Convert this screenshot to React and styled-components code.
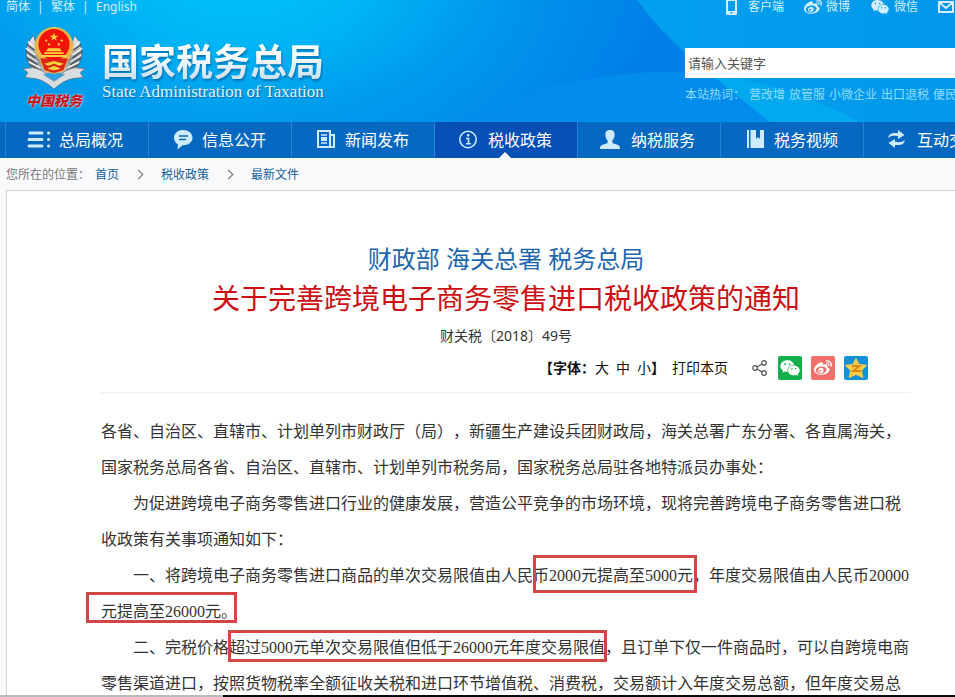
import React from "react";
import styled, { createGlobalStyle } from "styled-components";
import { FaWeibo } from "react-icons/fa";
import { AiFillWechat } from "react-icons/ai";

const navItems = [
  { icon: "list", label: "总局概况" },
  { icon: "chat", label: "信息公开" },
  { icon: "news", label: "新闻发布" },
  { icon: "info", label: "税收政策", active: true },
  { icon: "user", label: "纳税服务" },
  { icon: "book", label: "税务视频" },
  { icon: "swap", label: "互动交流" },
];

const hotWords = ["营改增", "放管服", "小微企业", "出口退税", "便民办税"];

const icons = {
  list: (
    <g stroke="currentColor" strokeWidth="3" strokeLinecap="round">
      <path d="M3 4h12M2 10.500h13M2 17h13" />
      <path d="M21.500 4h.1M21.500 10.500h.1M21.500 17h.1" />
    </g>
  ),
  chat: (
    <g>
      <path
        fill="currentColor"
        d="M13 1C8 1 4 4.200 4 8.800c0 3 1.800 5.400 4 6.700L7.500 20.500l5-4.200h.5c5.500 0 9.500-3 9.500-7.500S18.500 1 13 1z"
      />
      <path d="M9 7h9M9 10.500h7" stroke="#0768c1" strokeWidth="1.400" />
    </g>
  ),
  news: (
    <g fill="none" stroke="currentColor" strokeWidth="2">
      <path d="M5 2h12v16H5zM17 6h4v12h-5" />
      <path d="M8 6h6M8 14h6" strokeWidth="1.500" />
      <path d="M8 10h6" strokeWidth="4" />
    </g>
  ),
  info: (
    <g fill="none" stroke="currentColor" strokeWidth="1.600">
      <circle cx="12" cy="10.500" r="8.200" />
      <path d="M10 9.500h2.500v5M10 14.700h5" />
      <circle cx="12.200" cy="6.300" r=".6" fill="currentColor" />
    </g>
  ),
  user: (
    <path
      fill="currentColor"
      d="M11 1C8 1 6.200 3 6.400 5.800c.1 2.700 1.200 4.700 2.400 6.200.2 1.500-.4 2.200-1.800 2.800C3.500 15.800 1 16 1 20h20c0-4-2.500-4.200-6-5.200-1.400-.6-2-1.300-1.800-2.800 1.200-1.500 2.300-3.500 2.400-6.200C15.800 3 14 1 11 1z"
    />
  ),
  book: (
    <g fill="currentColor">
      <path d="M5 1h2v18H5z" />
      <path d="M8.500 1H14v9l2-2 2 2V1h4v18H8.500z" />
    </g>
  ),
  swap: (
    <g fill="currentColor">
      <path d="M3 9c1-4.500 4-5.500 10-5V1l6.500 5L13 10V7.200C9 6.500 6 6.500 3 9z" />
      <path d="M20 11c-1 4.500-4 5.500-10 5V19l-6.500-5L10 10v2.800c4 .7 7 .7 10-1.800z" />
    </g>
  ),
};

const Emblem = () => (
  <EmblemBox viewBox="0 0 66 66" aria-hidden="true">
    <defs>
      <linearGradient id="silver" x1="0" y1="0" x2="0" y2="1">
        <stop offset="0" stopColor="#f4f4f4" />
        <stop offset=".5" stopColor="#8d9298" />
        <stop offset="1" stopColor="#e9edf0" />
      </linearGradient>
    </defs>
    <g fill="url(#silver)" stroke="#4f5a63" strokeWidth=".7">
      <path d="M12 10C1 20 1 38 18 52l15 8 15-8c17-14 17-32 6-42l-6 20-15 12-15-12z" />
    </g>
    <g stroke="#3f474e" strokeWidth="1.300" fill="none">
      <path d="M5 19l8 6M4 26l10 7M5 33l11 7M8 40l12 6M13 47l10 3" />
      <path d="M61 19l-8 6M62 26l-10 7M61 33l-11 7M58 40l-12 6M53 47l-10 3" />
    </g>
    <g stroke="#fff" strokeWidth="1.200" fill="none">
      <path d="M6 16l7 6M4 23l10 7M5 30l11 7M7 37l12 6" />
      <path d="M60 16l-7 6M62 23l-10 7M61 30l-11 7M59 37l-12 6" />
    </g>
    <path
      d="M1 44l10-1c8 1 15 6 22 12 7-6 14-11 22-12l10 1-5 4 3 5-9 1c-8 1-14 5-21 11-7-6-13-10-21-11l-9-1 3-5z"
      fill="#d9dee2"
      stroke="#6d757c"
      strokeWidth=".8"
    />
    <path d="M22 50l11-3 11 3-11 7z" fill="#2ba2e6" stroke="#8b9299" strokeWidth=".8" />
    <circle cx="33" cy="21" r="20" fill="#e9b64b" />
    <path d="M18 33h30l-5 13-10 3-10-3z" fill="#db2717" stroke="#e9b64b" />
    <circle cx="33" cy="19" r="16" fill="#f01408" />
    <g fill="#ffd23b">
      <path d="M33 7l1.200 3h3.200l-2.600 2 1 3-2.800-1.900-2.800 1.900 1-3-2.600-2h3.200z" />
      <circle cx="25" cy="15" r="1.200" />
      <circle cx="28" cy="19" r="1.200" />
      <circle cx="38" cy="19" r="1.200" />
      <circle cx="41" cy="15" r="1.200" />
      <path d="M27 23h12l2 3H25zM23 27h20v2H23zM20 30h26v2H20z" />
      <path d="M23 39l10-3 10 3-4 2-6-2-6 2zM26 44l7-3 7 3-7 2z" />
    </g>
  </EmblemBox>
);

const App = () => {
  return (
    <>
      <GlobalStyle />
      <Page>
        <Header>
          <Backdrop viewBox="0 0 1004 122" preserveAspectRatio="none" aria-hidden="true">
            <defs>
              <linearGradient id="fan">
                <stop offset="0" stopColor="#02a0ee" />
                <stop offset="1" stopColor="#0396ea" />
              </linearGradient>
            </defs>
            <path d="M455 122Q560 74 660 72H715L770 122z" fill="#028dec" />
            <path d="M637 0Q668 42 712 75L770 122H1004V0z" fill="url(#fan)" />
            <path d="M712 75Q790 84 860 122H770z" fill="#03a9ee" />
          </Backdrop>
          <TopBar>
            <Langs>
              <a href="#cn">简体</a>
              <i>|</i>
              <a href="#tw">繁体</a>
              <i>|</i>
              <a href="#en">English</a>
            </Langs>
            <Tools>
              <Tool href="#app" $gap={11}>
                <svg width="11" height="16" viewBox="0 0 11 16">
                  <path fill="currentColor" fillRule="evenodd" d="M1 0h9l1 1v14l-1 1H1l-1-1V1zm1 2v10h7V2zm2.500 11v1.500h2V13z" />
                </svg>
                客户端
              </Tool>
              <Tool href="#weibo" $gap={4}>
                <FaWeibo size={18} />
                微博
              </Tool>
              <Tool href="#weixin" $gap={4}>
                <AiFillWechat size={20} />
                微信
              </Tool>
              <Tool href="#mail" $gap={4}>
                <svg width="16" height="12" viewBox="0 0 16 12" fill="none" stroke="currentColor" strokeWidth="2">
                  <path d="M1 1h14v10H1zM2 2l6 5 6-5" />
                </svg>
                邮箱
              </Tool>
            </Tools>
          </TopBar>
          <Banner>
            <Brand>
              <Seal>
                <Emblem />
                <SealText>中国税务</SealText>
              </Seal>
              <div>
                <BrandName>国家税务总局</BrandName>
                <BrandSub>State Administration of Taxation</BrandSub>
              </div>
            </Brand>
            <Search>
              <SearchInput type="text" placeholder="请输入关键字" aria-label="请输入关键字" />
              <HotWords>
                <span>本站热词：</span>
                {hotWords.map((word) => (
                  <a href="#hot" key={word}>{word}</a>
                ))}
              </HotWords>
            </Search>
          </Banner>
        </Header>

        <Nav>
          {navItems.map((item) => (
            <NavItem href="#nav" key={item.label} $active={item.active}>
              <svg width="24" height="22" viewBox="0 0 24 22">{icons[item.icon]}</svg>
              {item.label}
            </NavItem>
          ))}
        </Nav>

        <Crumbs>
          <span>您所在的位置：</span>
          <a href="#home">首页</a>
          <Arrow />
          <a href="#policy">税收政策</a>
          <Arrow />
          <a href="#latest">最新文件</a>
        </Crumbs>

        <Article>
          <Issuer>财政部 海关总署 税务总局</Issuer>
          <Title>关于完善跨境电子商务零售进口税收政策的通知</Title>
          <DocNo>财关税〔2018〕49号</DocNo>
          <ToolRow>
            <SizePicker>
              <b>【字体：</b>
              <TextButton type="button">大</TextButton>
              <TextButton type="button" $gap>中</TextButton>
              <TextButton type="button" $gap>小</TextButton>
              <b>】</b>
              <TextButton type="button" $gap>打印本页</TextButton>
            </SizePicker>
            <Shares>
              <svg width="15" height="16" viewBox="0 0 15 16" fill="none" stroke="#555" strokeWidth="1.200">
                <circle cx="3" cy="8" r="2.300" />
                <circle cx="12" cy="3" r="2.300" />
                <circle cx="12" cy="13" r="2.300" />
                <path d="M5 7l5-3M5 9l5 3" />
              </svg>
              <ShareButton type="button" aria-label="微信" $color="#14b04c">
                <AiFillWechat size={22} />
              </ShareButton>
              <ShareButton type="button" aria-label="微博" $color="#f0716b">
                <FaWeibo size={18} />
              </ShareButton>
              <ShareButton type="button" aria-label="QQ空间" $color="#1191dc">
                <svg width="22" height="22" viewBox="0 0 22 22">
                  <path
                    d="M11 2l3 5.800 7 .6-5 4.900 1.500 6.700L11 17l-6.500 3L6 13.300 1 8.400l7-.6z"
                    fill="#fdcb45"
                    stroke="#fdcb45"
                    strokeWidth="1.500"
                    strokeLinejoin="round"
                  />
                  <path d="M7 9h7.500L8 14h8" fill="none" stroke="#e08716" strokeWidth="1.800" />
                </svg>
              </ShareButton>
            </Shares>
          </ToolRow>
          <Content>
            <p>
              各省、自治区、直辖市、计划单列市财政厅（局），新疆生产建设兵团财政局，海关总署广东分署、各直属海关，国家税务总局各省、自治区、直辖市、计划单列市税务局，国家税务总局驻各地特派员办事处：
            </p>
            <Para>
              为促进跨境电子商务零售进口行业的健康发展，营造公平竞争的市场环境，现将完善跨境电子商务零售进口税收政策有关事项通知如下：
            </Para>
            <Para>
              一、将跨境电子商务零售进口商品的单次交易限值由人民
              <Boxed $inset="-3px -4px 1px 0">币2000元提高至5000元</Boxed>
              ，年度交易限值由人民币20000
              <Boxed $inset="-2px 0 7px -15px">元提高至26000元。</Boxed>
            </Para>
            <Para>
              二、完税价格
              <Boxed $inset="0 -2px 4px -1px">超过5000元单次交易限值但低于26000元年度交易限值</Boxed>
              ，且订单下仅一件商品时，可以自跨境电商零售渠道进口，按照货物税率全额征收关税和进口环节增值税、消费税，交易额计入年度交易总额，但年度交易总额
            </Para>
          </Content>
        </Article>
        <BottomEdge />
      </Page>
    </>
  );
};

export default App;

const GlobalStyle = createGlobalStyle`
  * {
    box-sizing: border-box;
  }
  body {
    margin: 0;
    overflow: hidden;
    background: #f8f9fb;
    font-family: "Noto Sans", "Noto Sans CJK SC", sans-serif;
    font-size: 12px;
    color: #333;
    text-spacing-trim: space-all;
  }
  a {
    color: inherit;
    text-decoration: none;
  }
  p, h1, h2 {
    margin: 0;
    font-weight: normal;
  }
  button {
    padding: 0;
    border: 0;
    background: none;
    font: inherit;
    color: inherit;
    cursor: pointer;
  }
`;

const Page = styled.div`
  min-width: 1004px;
  height: 100vh;
  overflow: hidden;
`;

const Header = styled.header`
  position: relative;
  height: 122px;
  color: #d3efff;
  background:
    radial-gradient(ellipse 420px 230px at 240px -20px, #00c4fb, #00b4f5 30%, rgba(0, 160, 238, 0.7) 60%, transparent),
    linear-gradient(90deg, #0598ea, #018ae9 40%, #0080e8 58%);
`;

const Backdrop = styled.svg`
  position: absolute;
  inset: 0;
  width: 100%;
  height: 100%;
`;

const TopBar = styled.div`
  position: relative;
  display: flex;
  justify-content: space-between;
  height: 14px;
  line-height: 14px;
`;

const Langs = styled.div`
  display: flex;
  padding-left: 6px;

  i {
    width: 21px;
    padding-left: 7px;
    font-style: normal;
  }
`;

const Tools = styled.div`
  display: flex;
  gap: 20px;
  width: 278px;
`;

const Tool = styled.a`
  display: flex;
  flex-shrink: 0;
  align-items: center;
  gap: ${(props) => props.$gap}px;
`;

const Banner = styled.div`
  position: relative;
  display: flex;
  justify-content: space-between;
`;

const Brand = styled.div`
  display: flex;
  gap: 16px;
  padding: 11px 0 0 22px;
`;

const Seal = styled.div`
  width: 64px;
`;

const EmblemBox = styled.svg`
  display: block;
  width: 64px;
  height: 66px;
`;

const SealText = styled.div`
  font-size: 14px;
  font-style: italic;
  font-weight: 900;
  line-height: 20px;
  text-align: center;
  color: #c8161d;
  text-shadow: 0 0 2px #fff;
`;

const BrandName = styled.h1`
  padding-top: 17px;
  font-size: 37px;
  font-weight: bold;
  line-height: 40px;
  color: transparent;
  background: linear-gradient(#fff 50%, #cfe3f1 90%);
  background-clip: text;
  filter: drop-shadow(1px 2px 1px rgba(0, 60, 120, 0.5));
`;

const BrandSub = styled.div`
  font-family: "Liberation Serif", serif;
  font-size: 17px;
  line-height: 20px;
  color: #e3f4fd;
  text-shadow: 1px 1px 1px rgba(0, 60, 120, 0.6);
`;

const Search = styled.div`
  width: 319px;
  padding-top: 34px;
`;

const SearchInput = styled.input`
  display: block;
  width: 100%;
  height: 30px;
  padding: 0 3px;
  border: 0;
  border-radius: 0;
  background: #fff;
  font: inherit;
  font-size: 13px;

  &::placeholder {
    color: #555;
    opacity: 1;
  }
`;

const HotWords = styled.div`
  display: flex;
  gap: 4px;
  line-height: 34px;
  white-space: nowrap;
  color: #8fdcff;
`;

const Nav = styled.nav`
  display: flex;
  height: 36px;
  padding-left: 5px;
  background: #0768c1;
  overflow: hidden;
`;

const NavItem = styled.a`
  position: relative;
  display: flex;
  flex: 0 0 143px;
  align-items: center;
  gap: 8px;
  padding-left: 21px;
  border-left: 1px solid #2585d3;
  font-size: 16px;
  line-height: 38px;
  color: #fff;
  background: ${(props) => (props.$active ? "#054fb5" : "none")};

  svg {
    color: #cdebff;
  }

  &::after {
    content: "";
    display: ${(props) => (props.$active ? "block" : "none")};
    position: absolute;
    bottom: 0;
    left: 50%;
    margin-left: -7px;
    border: 6px solid transparent;
    border-top: 0;
    border-bottom-color: #fff;
  }
`;

const Crumbs = styled.div`
  display: flex;
  align-items: center;
  height: 32px;
  padding-left: 6px;
  color: #777;

  a {
    color: #14609c;
  }
  span {
    margin-right: 5px;
  }
`;

const Arrow = styled.i`
  width: 7px;
  height: 7px;
  margin: 0 19px 0 16px;
  border: solid #666;
  border-width: 1px 1px 0 0;
  transform: rotate(45deg);
`;

const Article = styled.article`
  margin-left: 6px;
  padding: 48px 92px 0 94px;
  border: 1px solid #ccd2d4;
  background: #fff;
`;

const Issuer = styled.h2`
  font-size: 24px;
  line-height: 40px;
  text-align: center;
  color: #1c66b0;
`;

const Title = styled.h2`
  font-size: 28px;
  line-height: 38px;
  text-align: center;
  color: #cc0f12;
`;

const DocNo = styled.div`
  font-size: 14px;
  line-height: 38px;
  text-align: center;
`;

const ToolRow = styled.div`
  display: flex;
  justify-content: flex-end;
  align-items: center;
  gap: 24px;
  padding: 0 43px 11px 0;
  border-bottom: 1px solid #eee;
  font-size: 14px;
  line-height: 26px;
  color: #111;
`;

const SizePicker = styled.div`
  display: flex;
`;

const TextButton = styled.button`
  margin-left: ${(props) => (props.$gap ? 7 : 0)}px;
`;

const Shares = styled.div`
  display: flex;
  align-items: center;
  gap: 9px;

  > svg {
    margin-right: 2px;
  }
`;

const ShareButton = styled.button`
  display: flex;
  align-items: center;
  justify-content: center;
  width: 24px;
  height: 24px;
  border-radius: 2px;
  color: #fff;
  background: ${(props) => props.$color};
`;

const Content = styled.div`
  padding-top: 21px;
  font-family: "Liberation Serif", "Noto Sans CJK SC", serif;
  font-size: 16px;
  font-weight: 300;
  line-height: 36px;
`;

const Para = styled.p`
  text-indent: 32px;
`;

const Boxed = styled.span`
  position: relative;
  display: inline-block;
  text-indent: 0;

  &::after {
    content: "";
    position: absolute;
    inset: ${(props) => props.$inset};
    border: 3px solid #d24545;
  }
`;

const BottomEdge = styled.div`
  position: fixed;
  bottom: 0;
  left: 0;
  right: 0;
  height: 2px;
  background: linear-gradient(90deg, #bbb 223px, #0a0a0a 223px);
`;
